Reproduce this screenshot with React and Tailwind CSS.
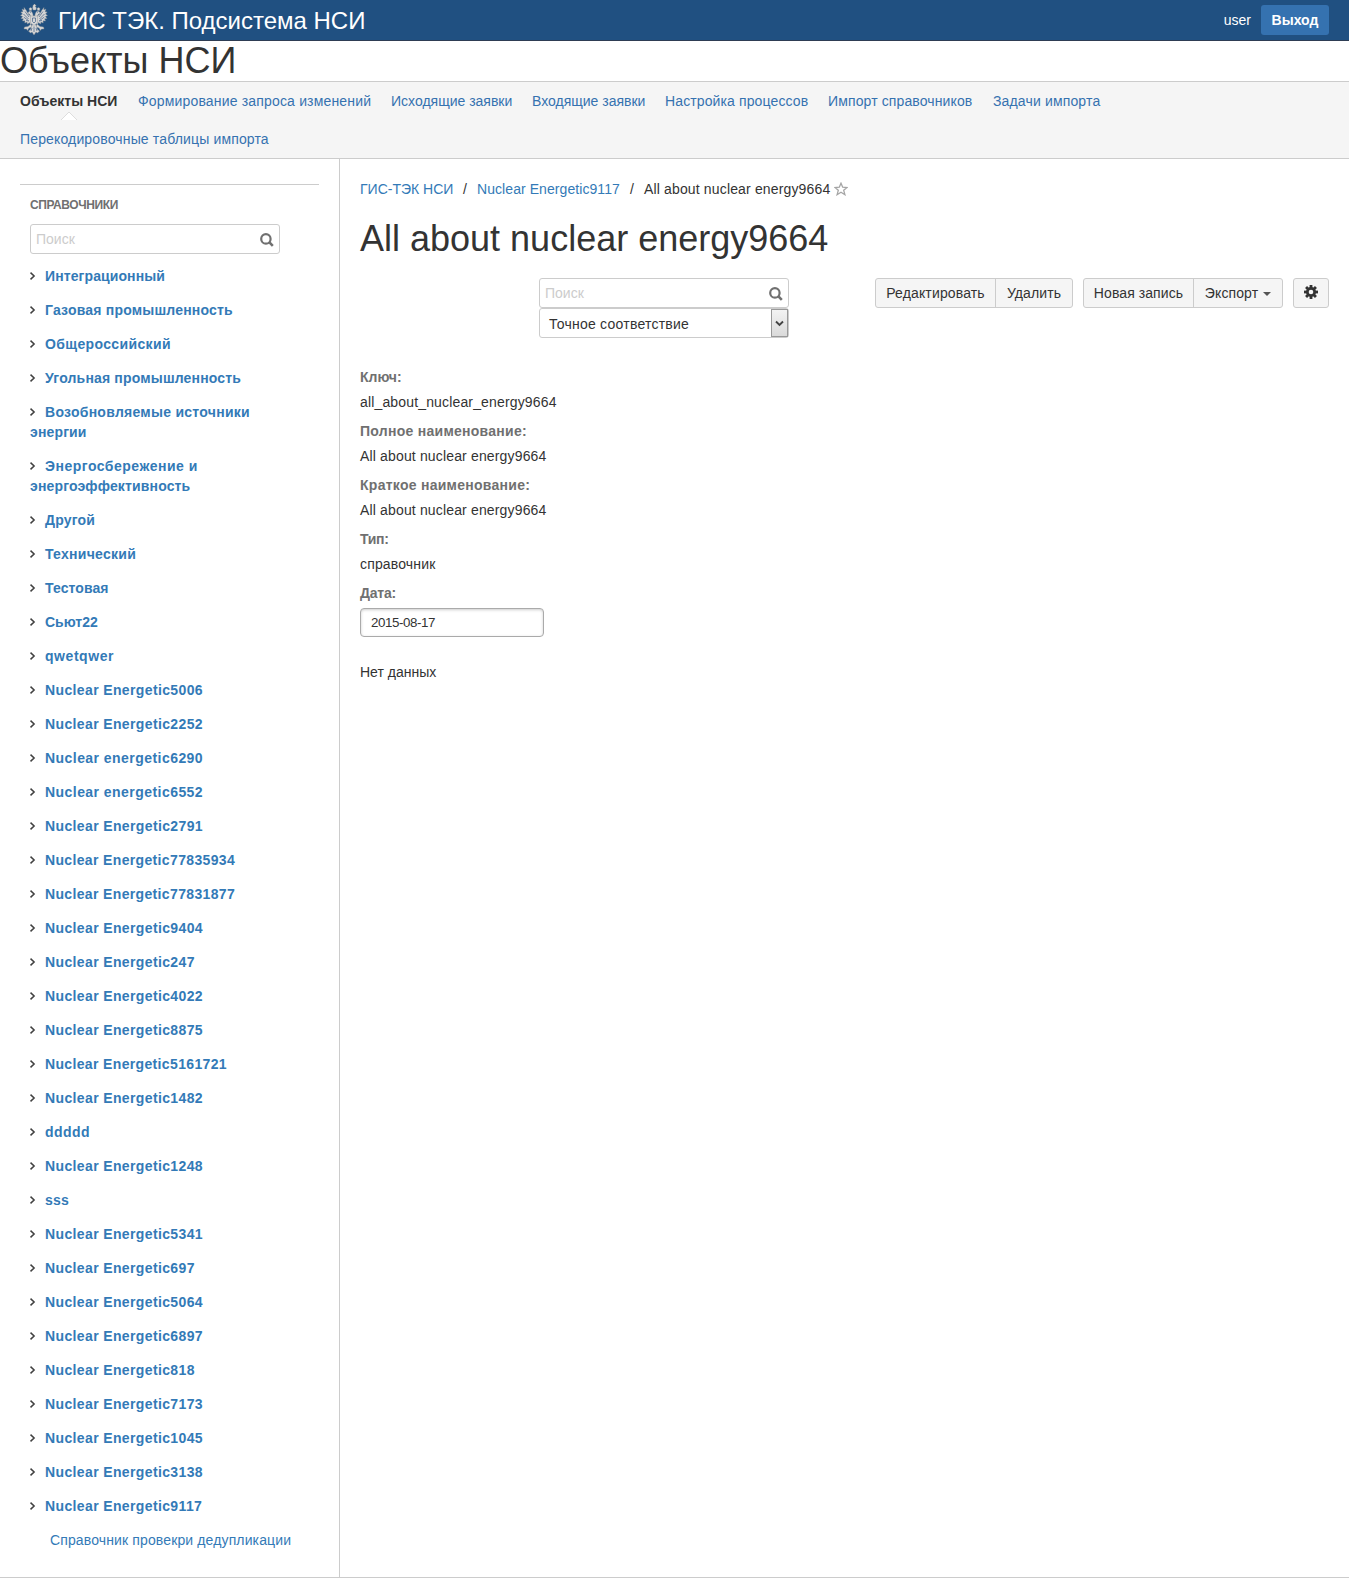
import React from "react";

const NAV = [
  ["Формирование запроса изменений", "w-[233px] tracking-[0.17px]"],
  ["Исходящие заявки", "w-[121px]"],
  ["Входящие заявки", "w-[113px]"],
  ["Настройка процессов", "w-[143px] tracking-[0.12px]"],
  ["Импорт справочников", "w-[145px] tracking-[0.12px]"],
  ["Задачи импорта", "w-[109px] tracking-[0.15px]"],
];

const TREE = [
  ["tracking-[0.1px]", "Интеграционный"],
  ["tracking-[0.2px]", "Газовая промышленность"],
  ["tracking-[0.36px]", "Общероссийский"],
  ["tracking-[0.17px]", "Угольная промышленность"],
  ["tracking-[0.27px]", "Возобновляемые источники", "энергии"],
  ["tracking-[0.5px]", "Энергосбережение и", "энергоэффективность"],
  ["tracking-[0.2px]", "Другой"],
  ["tracking-[0.27px]", "Технический"],
  ["tracking-[0.1px]", "Тестовая"],
  ["tracking-normal", "Сьют22"],
  ["tracking-[0.55px]", "qwetqwer"],
  ["tracking-[0.37px]", "Nuclear Energetic5006"],
  ["tracking-[0.37px]", "Nuclear Energetic2252"],
  ["tracking-[0.45px]", "Nuclear energetic6290"],
  ["tracking-[0.45px]", "Nuclear energetic6552"],
  ["tracking-[0.37px]", "Nuclear Energetic2791"],
  ["tracking-[0.35px]", "Nuclear Energetic77835934"],
  ["tracking-[0.35px]", "Nuclear Energetic77831877"],
  ["tracking-[0.37px]", "Nuclear Energetic9404"],
  ["tracking-[0.37px]", "Nuclear Energetic247"],
  ["tracking-[0.37px]", "Nuclear Energetic4022"],
  ["tracking-[0.37px]", "Nuclear Energetic8875"],
  ["tracking-[0.35px]", "Nuclear Energetic5161721"],
  ["tracking-[0.37px]", "Nuclear Energetic1482"],
  ["tracking-[0.45px]", "ddddd"],
  ["tracking-[0.37px]", "Nuclear Energetic1248"],
  ["tracking-[0.2px]", "sss"],
  ["tracking-[0.37px]", "Nuclear Energetic5341"],
  ["tracking-[0.37px]", "Nuclear Energetic697"],
  ["tracking-[0.37px]", "Nuclear Energetic5064"],
  ["tracking-[0.37px]", "Nuclear Energetic6897"],
  ["tracking-[0.37px]", "Nuclear Energetic818"],
  ["tracking-[0.37px]", "Nuclear Energetic7173"],
  ["tracking-[0.37px]", "Nuclear Energetic1045"],
  ["tracking-[0.37px]", "Nuclear Energetic3138"],
  ["tracking-[0.37px]", "Nuclear Energetic9117"],
];

const FIELDS = [
  ["Ключ:", "all_about_nuclear_energy9664", "tracking-normal"],
  ["Полное наименование:", "All about nuclear energy9664", "tracking-[0.27px]"],
  ["Краткое наименование:", "All about nuclear energy9664", "tracking-[0.27px]"],
  ["Тип:", "справочник", "tracking-[-0.3px]"],
];

function Emblem() {
  return (
    <svg width="28" height="32" viewBox="0 0 28 32" className="block shrink-0">
      <g fill="#d6d6d6" stroke="#8b8f96" strokeWidth="0.4">
        <path d="M13 1h1V0h1v1h1v1h-1l1.4 2-.6 2h-2.600l-.6-2L13 2z" />
        <path d="M9 4.500l1.500-1 1.500 1-.5 2h-2zM17 4.500l1.500-1 1.500 1-.5 2h-2z" />
        <path d="M12.500 17L11 13 9.500 10 7.500 9.500 9 7.500l2-.5 1.500 2 .8 3h1.400l.8-3 1.500-2 2 .5 1.500 2-2 .5L17 13l-1.500 4z" />
        <path d="M12 13L8.500 10.500 6 6 4 3.500 4.200 6 2 5l1 2.800L.8 8l1.700 2L.5 11.500l2.200 1L1 14.500l2.500.3L2.500 17l2.500-.2L4.800 19l2.200-1 .5 2 2-1.500 1 2L12 18zM16 13l3.500-2.500L22 6l2-2.500L23.800 6 26 5l-1 2.800 2.200.2-1.700 2 2 1.500-2.200 1L27 14.500l-2.500.3 1 2.200-2.500-.2.200 2.200-2.200-1-.5 2-2-1.500-1 2L16 18z" />
        <path d="M10.500 12h7v7L14 22l-3.500-3z" />
        <path d="M11 20l-3 2.500-3.500.5-.5 2 2.500 0 1 1.500 1.500-2.500 3-1zM17 20l3 2.500 3.500.5.500 2-2.500 0-1 1.500-1.500-2.500-3-1z" />
        <path d="M12 21h4l1.500 4.500 2 1.500-2 2-1.500-1-2 3-2-3-1.500 1-2-2 2-1.500z" />
      </g>
      <g stroke="#405f86" strokeWidth="0.7" fill="none">
        <path d="M5 7.500L9 13M3.500 10L8.500 15M3.800 13.200L8.500 16.500M6 16.500l3 .5M23 7.500L19 13M24.500 10l-5 5M24.200 13.200l-4.700 3.300M22 16.500l-3 .5M14 22.500V28M12 24l-1 3M16 24l1 3" />
        <path d="M12.500 14h3v3.500L14 19l-1.500-1.500zM10 8.200h1M17 8.200h1" />
      </g>
    </svg>
  );
}

function SearchIcon() {
  return (
    <svg width="14" height="14" viewBox="0 0 14 14" className="mt-px block" fill="none" stroke="#707070">
      <circle cx="5.900" cy="5.900" r="4.700" strokeWidth="2.200" />
      <path d="M9.200 9.200L12.800 12.800" strokeWidth="2.600" />
    </svg>
  );
}

function Search() {
  return (
    <div className="flex h-[30px] w-[250px] items-center justify-between rounded-[3px] border border-[#cccccc] bg-white pl-[5px] pr-[5px] text-[#cccccc]">
      <span className="text-[14px] leading-5">Поиск</span>
      <SearchIcon />
    </div>
  );
}

function Chevron() {
  return (
    <svg width="6" height="8" viewBox="0 0 6 8" className="mr-[9px] inline-block align-[1px]" fill="none" stroke="#404040" strokeWidth="1.500">
      <path d="M0.500 0.600L4.100 4L0.500 7.400" />
    </svg>
  );
}

function GearIcon() {
  return (
    <svg width="14" height="14" viewBox="0 0 14 14" className="block">
      <g fill="#333333">
        <rect x="5.600" y="0" width="2.800" height="14" />
        <rect x="5.600" y="0" width="2.800" height="14" transform="rotate(45 7 7)" />
        <rect x="5.600" y="0" width="2.800" height="14" transform="rotate(90 7 7)" />
        <rect x="5.600" y="0" width="2.800" height="14" transform="rotate(135 7 7)" />
        <circle cx="7" cy="7" r="5" />
      </g>
      <circle cx="7" cy="7" r="2.300" fill="#f5f5f5" />
    </svg>
  );
}

export default function App() {
  return (
    <div className="flex h-[1578px] w-[1349px] flex-col overflow-hidden bg-white font-['Liberation_Sans',Arial,sans-serif] text-[14px] leading-5 text-[#333333]">
      <header className="flex h-[41px] shrink-0 items-center justify-between border-b border-[#2e3d54] bg-[#205081] pl-[20px] pr-[20px] text-white">
        <div className="flex items-center">
          <Emblem />
          <span className="ml-[10px] whitespace-nowrap pt-[2px] text-[24px] leading-[38px]">ГИС ТЭК. Подсистема НСИ</span>
        </div>
        <div className="flex items-center gap-[10px]">
          <span>user</span>
          <button className="h-[30px] w-[68px] rounded-[3px] bg-[#3572b0] text-[14px] font-bold">Выход</button>
        </div>
      </header>

      <h1 className="h-[40px] shrink-0 whitespace-nowrap text-[36px] leading-[40px]">Объекты НСИ</h1>

      <nav className="flex h-[78px] shrink-0 flex-wrap content-start gap-x-[20px] border-y border-[#cccccc] bg-[#f5f5f5] px-[20px] text-[#3572b0]">
        <div className="relative h-[38px] w-[98px] whitespace-nowrap py-[9px] font-bold text-[#333333]">
          Объекты НСИ
          <svg width="16" height="8" viewBox="0 0 16 8" className="absolute left-[41px] top-[30px]">
            <path d="M0 8L8 0L16 8" fill="#ffffff" stroke="#dddddd" />
          </svg>
        </div>
        {NAV.map(([t, w]) => (
          <a key={t} className={`h-[38px] whitespace-nowrap py-[9px] ${w}`}>{t}</a>
        ))}
        <div className="h-0 w-full" />
        <a className="h-[38px] whitespace-nowrap py-[9px] tracking-[0.15px]">Перекодировочные таблицы импорта</a>
      </nav>

      <div className="flex min-h-0 flex-1 border-b border-[#cccccc]">
        <aside className="w-[340px] shrink-0 border-r border-[#cccccc] px-[20px] pt-[25px]">
          <div className="border-t border-[#cccccc] px-[10px] pt-[10px]">
            <h2 className="text-[12px] font-bold leading-5 tracking-[-0.4px] text-[#707070]">СПРАВОЧНИКИ</h2>
            <div className="mt-[9px]">
              <Search />
            </div>
            <ul className="mt-[5px]">
              {TREE.map(([tracking, first, second]) => (
                <li key={first} className="whitespace-nowrap py-[7px] font-bold text-[#337ab7]">
                  <Chevron />
                  <span className={tracking}>{first}</span>
                  {second && <div className="tracking-[0.15px]">{second}</div>}
                </li>
              ))}
              <li className="whitespace-nowrap py-[7px] pl-[20px] tracking-[0.13px] text-[#337ab7]">Справочник провекри дедупликации</li>
            </ul>
          </div>
        </aside>

        <main className="flex-1 pl-[20px] pr-[20px] pt-[20px]">
          <div className="flex items-center whitespace-nowrap">
            <a className="w-[93px] text-[#337ab7]">ГИС-ТЭК НСИ</a>
            <span className="w-[24px] text-center">/</span>
            <a className="w-[143px] tracking-[0.07px] text-[#337ab7]">Nuclear Energetic9117</a>
            <span className="w-[24px] text-center">/</span>
            <span className="w-[186px] tracking-[0.15px]">All about nuclear energy9664</span>
            <svg width="14" height="14" viewBox="0 0 14 14" className="ml-[4px]" fill="none" stroke="#a5a5a5" strokeWidth="1.300">
              <path d="M7 1.200l1.700 4 4.400.3-3.400 2.800 1.200 4.400L7 10.300l-3.900 2.400 1.200-4.400L.9 5.500l4.400-.3z" />
            </svg>
          </div>
          <h2 className="mt-[20px] h-[40px] whitespace-nowrap text-[36px] leading-[40px]">All about nuclear energy9664</h2>

          <div className="mt-[19px] flex justify-between">
            <div className="ml-[179px]">
              <Search />
              <div className="flex h-[30px] w-[250px] items-stretch justify-between rounded-[3px] border border-[#cccccc] pl-[9px]">
                <span className="pt-[5px] tracking-[0.24px]">Точное соответствие</span>
                <span className="flex w-[17px] items-center justify-center border border-[#999999] bg-linear-to-b from-[#f3f3f3] to-[#dadada]">
                  <svg width="9" height="7" viewBox="0 0 9 7" fill="none" stroke="#444444" strokeWidth="1.900">
                    <path d="M1 1.500L4.500 5L8 1.500" />
                  </svg>
                </span>
              </div>
            </div>
            <div className="flex h-[30px] gap-[10px]">
              <div className="flex divide-x divide-[#cccccc] rounded-[3px] border border-[#cccccc] bg-[#f5f5f5] leading-7">
                <button className="w-[120px] tracking-[0.15px]">Редактировать</button>
                <button className="w-[76px] tracking-[0.1px]">Удалить</button>
              </div>
              <div className="flex divide-x divide-[#cccccc] rounded-[3px] border border-[#cccccc] bg-[#f5f5f5] leading-7">
                <button className="w-[110px] tracking-[0.08px]">Новая запись</button>
                <button className="flex w-[88px] items-center justify-center gap-[5px] tracking-[0.1px]">
                  Экспорт
                  <svg width="8" height="4" viewBox="0 0 8 4" className="mt-px"><path d="M0 0H8L4 4z" fill="#555555" /></svg>
                </button>
              </div>
              <button className="flex w-[36px] justify-center rounded-[3px] border border-[#cccccc] bg-[#f5f5f5] pt-[6px]">
                <GearIcon />
              </button>
            </div>
          </div>

          <div className="mt-[29px]">
            {FIELDS.map(([k, v, tracking]) => (
              <div key={k} className="h-[54px]">
                <div className={`h-[25px] font-bold text-[#707070] ${tracking}`}>{k}</div>
                <div className="tracking-[0.155px]">{v}</div>
              </div>
            ))}
            <div className="font-bold tracking-[-0.2px] text-[#707070]">Дата:</div>
            <div className="mt-[5px] flex h-[29px] w-[184px] items-center rounded-[4px] border border-[#aaaaaa] pl-[10px] pt-px text-[13.333px] tracking-[-0.42px] shadow-[inset_0_1px_3px_#cccccc]">
              2015-08-17
            </div>
            <p className="mt-[25px]">Нет данных</p>
          </div>
        </main>
      </div>
    </div>
  );
}
